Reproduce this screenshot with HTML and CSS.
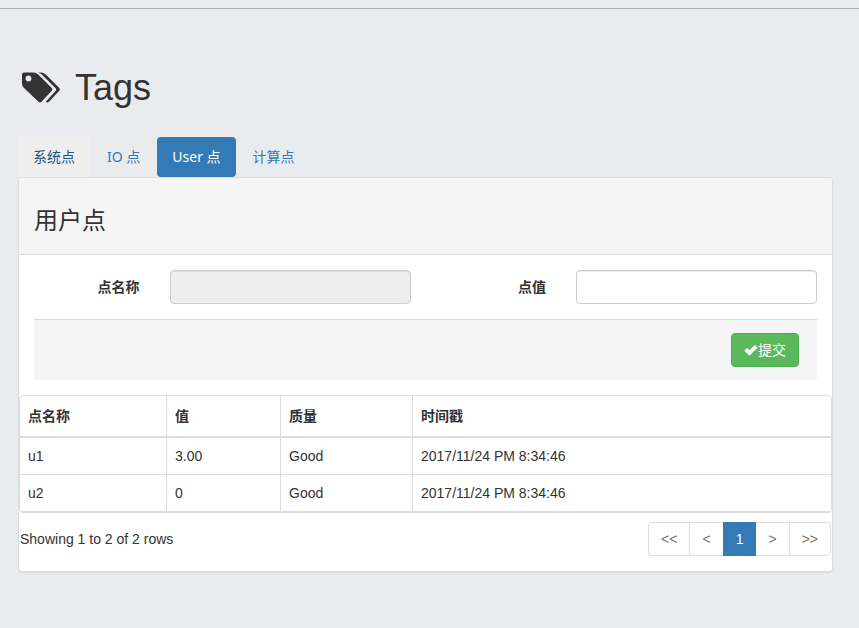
FILE: index.html
```html
<!DOCTYPE html>
<html lang="zh-CN">
<head>
<meta charset="utf-8">
<title>Tags</title>
<link rel="stylesheet" href="styles.css">
</head>
<body>
<div class="topbar"></div>
<main class="page">
  <header class="page-header">
    <svg class="tags-icon" viewBox="0 0 38 32" aria-hidden="true">
      <path fill-rule="evenodd" d="M2 .5H11.500Q14 .5 16 2.200L29.800 16Q31 17.300 29.800 18.800L19.500 29.800Q18 31 16.500 29.800L1.500 15.500Q0 13.800 0 11.500V2.500Q0 .5 2 .5ZM6.500 3.600a2.900 2.900 0 1 0 0 5.800a2.900 2.900 0 1 0 0-5.800Z"/>
      <path d="M16 .5H19Q21.500 .5 23.500 2.300L37.300 16Q38.500 17.300 37.300 18.800L27 29.800Q25.500 31 23.700 29.800L33.600 19.100Q34.800 17.500 33.600 16.200L20 2.700Q18.500 1.200 16 .5Z"/>
    </svg>
    <h1>Tags</h1>
  </header>
  <nav class="tabs">
    <a class="tab tab-hover" href="#system">系统点</a>
    <a class="tab" href="#io">IO 点</a>
    <a class="tab tab-active" href="#user" aria-current="page">User 点</a>
    <a class="tab" href="#calc">计算点</a>
  </nav>
  <section class="panel">
    <div class="panel-heading"><h2>用户点</h2></div>
    <form class="panel-body">
      <div class="fields">
        <label for="tag-name">点名称</label>
        <div class="field"><input id="tag-name" type="text" readonly></div>
        <label for="tag-value">点值</label>
        <div class="field"><input id="tag-value" type="text"></div>
      </div>
      <div class="form-footer">
        <button class="submit" type="button"><svg class="check" viewBox="0 0 14 12" aria-hidden="true"><path d="M.6 6.300L2.600 4.200Q3 3.900 3.400 4.200L5.500 6.300L10.500 1.300Q11 .9 11.400 1.300L13.200 3.200Q13.600 3.600 13.200 4L6 11.200Q5.500 11.600 5 11.200L.6 7Q.3 6.700 .6 6.300Z"/></svg>提交</button>
      </div>
    </form>
    <div class="table-area">
      <div class="table-frame">
        <table>
          <colgroup><col class="col-name"><col class="col-value"><col class="col-quality"><col></colgroup>
          <thead><tr><th>点名称</th><th>值</th><th>质量</th><th>时间戳</th></tr></thead>
          <tbody>
            <tr><td>u1</td><td>3.00</td><td>Good</td><td>2017/11/24 PM 8:34:46</td></tr>
            <tr><td>u2</td><td>0</td><td>Good</td><td>2017/11/24 PM 8:34:46</td></tr>
          </tbody>
        </table>
      </div>
      <div class="table-footer">
        <span>Showing 1 to 2 of 2 rows</span>
        <nav class="pagination">
          <a href="#first">&lt;&lt;</a>
          <a href="#prev">&lt;</a>
          <a class="current" href="#1" aria-current="page">1</a>
          <a href="#next">&gt;</a>
          <a href="#last">&gt;&gt;</a>
        </nav>
      </div>
    </div>
  </section>
</main>
</body>
</html>
```
FILE: styles.css
```css
* {
  box-sizing: border-box;
}

body {
  margin: 0;
  background: #eaebef;
  color: #333;
  font-family: "Liberation Sans", "Noto Sans CJK SC", sans-serif;
  font-size: 14px;
  line-height: 20px;
}

.topbar {
  height: 9px;
  border-bottom: 1px solid #afafb2;
}

.page {
  padding: 59px 26px 56px 18px;
}

.page-header {
  display: flex;
  align-items: center;
  gap: 15px;
  margin-bottom: 20px;
  padding: 0 0 9px 4px;
  border-bottom: 1px solid #eee;
}

.tags-icon {
  width: 38px;
  height: 32px;
  fill: #333;
}

h1 {
  margin: 0;
  font-size: 36px;
  font-weight: 400;
  line-height: 39px;
}

.tabs {
  display: flex;
  gap: 2px;
  font-family: "Noto Sans", "Noto Sans CJK SC", sans-serif;
}

.tab {
  padding: 10px 15px;
  border-radius: 4px;
  color: #337ab7;
  text-decoration: none;
}

.tab-hover {
  background: #eee;
  color: #23527c;
}

.tab-active {
  background: #337ab7;
  color: #fff;
}

.panel {
  border: 1px solid #ddd;
  border-radius: 4px;
  background: #fff;
  box-shadow: 0 1px 1px rgba(0, 0, 0, 0.05);
}

.panel-heading {
  padding: 30px 15px 20px;
  border-bottom: 1px solid #ddd;
  border-radius: 3px 3px 0 0;
  background: #f5f5f5;
}

h2 {
  margin: 0;
  font-size: 24px;
  font-weight: 400;
  line-height: 26px;
}

.panel-body {
  padding: 15px;
}

.fields {
  display: grid;
  grid-template-columns: 2fr 4fr 2fr 4fr;
  margin: 0 -15px 15px;
}

.fields label {
  padding: 7px 15px;
  font-weight: 700;
  text-align: right;
}

.field {
  padding: 0 15px;
}

.field input {
  display: block;
  width: 100%;
  height: 34px;
  padding: 6px 12px;
  border: 1px solid #ccc;
  border-radius: 4px;
  background: #fff;
  box-shadow: inset 0 1px 1px rgba(0, 0, 0, 0.075);
  color: #555;
  font: inherit;
}

.field input:read-only {
  background: #eee;
}

.form-footer {
  display: flex;
  justify-content: flex-end;
  padding: 13px 18px;
  border-top: 1px solid #ddd;
  border-radius: 0 0 3px 3px;
  background: #f5f5f5;
}

.submit {
  display: flex;
  align-items: center;
  padding: 6px 12px;
  border: 1px solid #4cae4c;
  border-radius: 4px;
  background: #5cb85c;
  color: #fff;
  font: inherit;
}

.check {
  width: 14px;
  height: 12px;
  fill: #fff;
}

.table-area {
  padding-bottom: 15px;
}

.table-frame {
  overflow: hidden;
  border: 1px solid #ddd;
  border-radius: 4px;
}

table {
  width: 100%;
  border-collapse: separate;
  border-spacing: 0;
  border-bottom: 1px solid #ddd;
  table-layout: fixed;
}

.col-name {
  width: 147px;
}

.col-value {
  width: 114px;
}

.col-quality {
  width: 132px;
}

th,
td {
  padding: 8px;
  border-right: 1px solid #ddd;
  text-align: left;
}

th {
  padding: 10px 8px;
  border-bottom: 2px solid #ddd;
}

th:last-child,
td:last-child {
  border-right: 0;
}

tbody tr + tr td {
  border-top: 1px solid #ddd;
}

.table-footer {
  display: flex;
  align-items: center;
  justify-content: space-between;
  padding: 9px 1px 0;
}

.pagination {
  display: flex;
}

.pagination a {
  margin-left: -1px;
  padding: 6px 12px;
  border: 1px solid #ddd;
  background: #fff;
  color: #777;
  text-decoration: none;
}

.pagination a:first-child {
  border-radius: 4px 0 0 4px;
}

.pagination a:last-child {
  border-radius: 0 4px 4px 0;
}

.pagination .current {
  z-index: 1;
  border-color: #337ab7;
  background: #337ab7;
  color: #fff;
}
```
